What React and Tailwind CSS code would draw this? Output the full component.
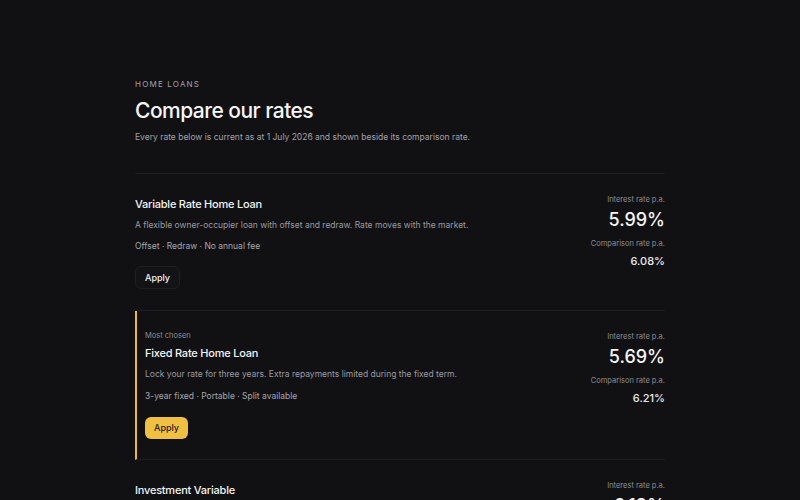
const loans = [
  {
    name: "Variable Rate Home Loan",
    blurb: "A flexible owner-occupier loan with offset and redraw. Rate moves with the market.",
    features: "Offset · Redraw · No annual fee",
    rate: "5.99%",
    comparison: "6.08%",
  },
  {
    name: "Fixed Rate Home Loan",
    blurb: "Lock your rate for three years. Extra repayments limited during the fixed term.",
    features: "3-year fixed · Portable · Split available",
    rate: "5.69%",
    comparison: "6.21%",
    featured: true,
  },
  {
    name: "Investment Variable",
    blurb: "For residential investment properties, with interest-only options available.",
    features: "Interest-only · Offset · Redraw",
    rate: "6.19%",
    comparison: "6.34%",
  },
];

function RateColumn({ rate, comparison }) {
  return (
    <div className="flex shrink-0 flex-col items-end text-right">
      <span className="text-[7.5px] leading-[12px] text-[#8e8e96]">Interest rate p.a.</span>
      <span className="mt-0.5 text-[18px] font-medium leading-[24px] text-[#f4f4f5]">
        {rate}
      </span>
      <span className="mt-[6px] text-[7.5px] leading-[12px] text-[#8e8e96]">
        Comparison rate p.a.
      </span>
      <span className="mt-[3px] text-[11px] font-medium leading-[16px] text-[#ececef]">
        {comparison}
      </span>
    </div>
  );
}

function LoanRow({ loan }) {
  return (
    <li
      className={`flex items-start justify-between gap-6 pt-5 ${
        loan.featured ? "border-l-2 border-l-[#e9b93a] pb-[20px] pl-[8px]" : "pb-[21px]"
      }`}
    >
      <div className="flex flex-col items-start">
        {loan.featured && (
          <span className="text-[7.5px] leading-[10px] text-[#8e8e96]">Most chosen</span>
        )}
        <h2
          className={`text-[11px] font-medium leading-[20px] tracking-[-0.02em] text-[#f4f4f5] ${
            loan.featured ? "mt-[2px]" : ""
          }`}
        >
          {loan.name}
        </h2>
        <p className="mt-1 text-[8.5px] leading-[14px] text-[#9a9aa2]">{loan.blurb}</p>
        <p
          className={`text-[8.5px] leading-[14px] text-[#a6a6ad] ${
            loan.featured ? "mt-[8px]" : "mt-[7px]"
          }`}
        >
          {loan.features}
        </p>
        <button
          type="button"
          className={
            loan.featured
              ? "mt-[14px] h-[22px] rounded-md bg-[#f1c043] px-[9px] text-[9px] font-medium text-[#1c1a14]"
              : "mt-[13px] h-[23px] rounded-md border border-[#202024] bg-[#131316] px-[9px] text-[9px] font-medium text-[#f4f4f5]"
          }
        >
          Apply
        </button>
      </div>
      <RateColumn rate={loan.rate} comparison={loan.comparison} />
    </li>
  );
}

export default function App() {
  return (
    <div className="min-h-screen bg-[#111113] font-['Inter',sans-serif] antialiased">
      <main className="mx-auto w-[530px] pt-[78px] pb-10">
        <p className="text-[8px] leading-[12px] tracking-[0.15em] text-[#a1a1aa]">HOME LOANS</p>
        <h1 className="mt-[7px] text-[21px] font-medium leading-[28px] tracking-tight text-[#f6f6f7]">
          Compare our rates
        </h1>
        <p className="mt-[5px] text-[8.5px] leading-[14px] text-[#a1a1aa]">
          Every rate below is current as at 1 July 2026 and shown beside its comparison rate.
        </p>
        <ul className="mt-[29px] divide-y divide-[#1e1e22] border-t border-[#1e1e22]">
          {loans.map((loan) => (
            <LoanRow key={loan.name} loan={loan} />
          ))}
        </ul>
      </main>
    </div>
  );
}
